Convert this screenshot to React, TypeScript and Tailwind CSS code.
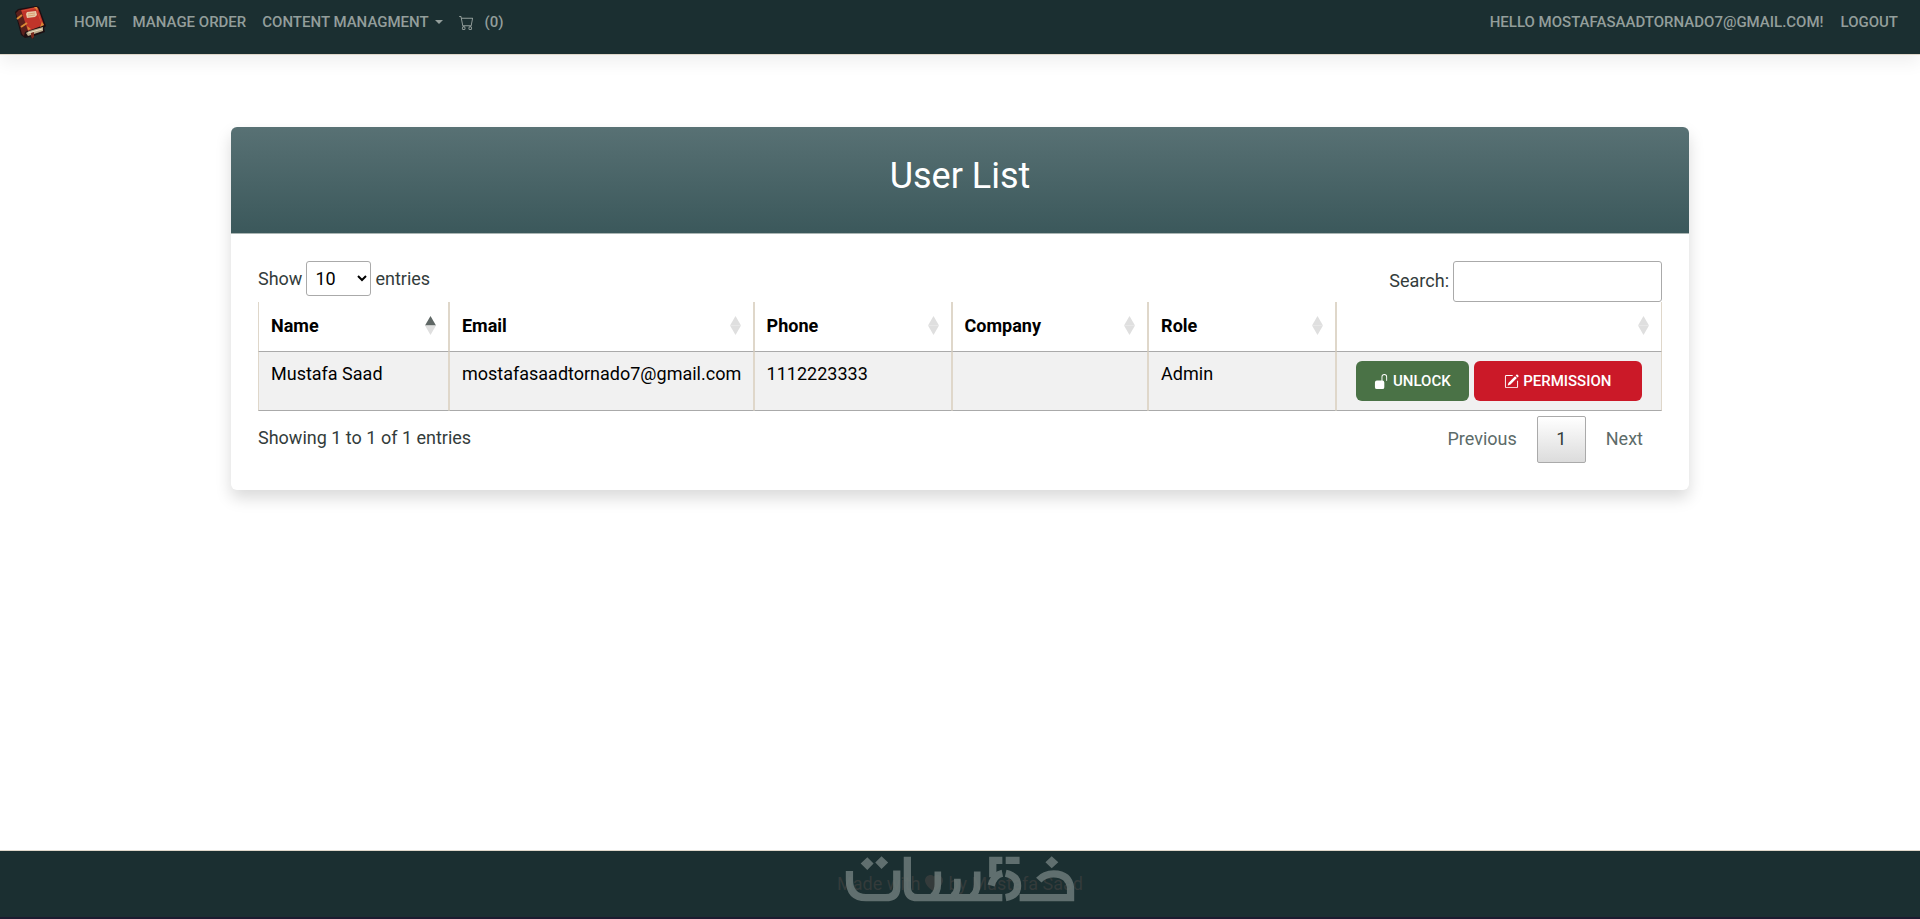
import React from "react";
import { BsCart, BsHeartFill, BsPencilSquare, BsUnlockFill } from "react-icons/bs";

type Sort = "asc" | "none";

const columns: { label: string; width: string; sort: Sort }[] = [
  { label: "Name", width: "w-[13.6%]", sort: "asc" },
  { label: "Email", width: "w-[21.7%]", sort: "none" },
  { label: "Phone", width: "w-[14.1%]", sort: "none" },
  { label: "Company", width: "w-[14%]", sort: "none" },
  { label: "Role", width: "w-[13.4%]", sort: "none" },
  { label: "", width: "w-[23.2%]", sort: "none" },
];

const users = [
  { name: "Mustafa Saad", email: "mostafasaadtornado7@gmail.com", phone: "1112223333", company: "", role: "Admin" },
];

const cellBorder = "border-x border-x-[#dfd7ca] border-b border-b-[#aaa]";

function BookLogo() {
  return (
    <svg viewBox="0 0 40 42" className="h-[42px] w-10" aria-hidden="true">
      <path d="M5 10 L8 7 L26 4 L29 5 L36 24 L34 26 L35 30 L24 34 L23 37 L20 35 L15 36 L11 33 Z" fill="#1c0f12" />
      <path d="M6 11 L9 8 L12 8 L19 28 L15 30 L14 34 L12 32 Z" fill="#5b201c" />
      <path d="M11 8 L26 5 L28 6 L34 23 L18 29 Z" fill="#c0342a" />
      <path d="M12 9 L26 6 L32 22" stroke="#d54c36" strokeWidth="1" fill="none" />
      <path d="M16 12 L17 10 L26 9 L27 13 L25 15 L17 16 Z" fill="#e6c9a8" />
      <path d="M18 12 L25 11 M18 14 L25 13" stroke="#d9a070" strokeWidth="1" />
      <path d="M7 17 L12 13 M11 25 L17 21" stroke="#d98a35" strokeWidth="2" />
      <path d="M24 5 L27 5 L28 9 Z M34 23 L30 25 L32 20 Z M18 28 L17 24 L21 27 Z" fill="#d98a35" />
      <path d="M16 31 L19 29 L33 25 L33 29 L18 34 Z" fill="#b9a98a" />
      <path d="M18 31 L32 27" stroke="#ece0c4" strokeWidth="1" />
      <path d="M21 31 L24 30 L24 35 L22 37 L21 34 Z" fill="#7a2a1e" />
    </svg>
  );
}

function WatermarkLogo() {
  return (
    <svg viewBox="130 40 700 145" className="h-12 w-[232px]" fill="none" stroke="#6d7b7a" strokeWidth="22" aria-hidden="true">
      <path d="M200 47 L219 66 L200 85 L180 66 Z M243 44 L263 63 L243 82 L224 63 Z M757 44 L777 62 L757 80 L738 62 Z" fill="#6d7b7a" stroke="none" />
      <path d="M146 88 V115 Q146 169 196 169 H255 Q289 169 289 138 V87" />
      <path d="M321 45 V138 Q321 169 352 169 H608" />
      <path d="M413 90 V128 Q413 152 397 164 M532 90 V128 Q532 152 516 164" strokeWidth="20" />
      <path d="M472 112 V136 Q472 154 458 164" strokeWidth="20" />
      <path d="M608 56 H579 V107 M618 56 H660" />
      <path d="M574 132 Q583 100 608 95" />
      <path d="M618 95 Q654 103 654 133 Q654 163 618 169" />
      <path d="M660 169 H814 V140 Q810 98 763 97 Q735 97 718 116" />
    </svg>
  );
}

function SortMark({ sort }: { sort: Sort }) {
  return (
    <svg viewBox="0 0 11 19" className="h-[19px] w-[11px] shrink-0" aria-hidden="true">
      <path d="M0 9.5 L5.5 0 L11 9.5 Z" fill={sort === "asc" ? "#5f6765" : "#dfdfdf"} />
      <path d="M0 9.5 L5.5 19 L11 9.5 Z" fill="#dfdfdf" />
    </svg>
  );
}

function NavBar() {
  return (
    <header className="border-b border-[#dfd7ca] bg-[#1b2f31] shadow-[0_8px_16px_rgba(0,0,0,0.06)]">
      <nav className="flex h-[54px] items-start justify-between px-[10px] text-[15px] leading-[22px] font-medium text-[#939e9b]">
        <div className="flex items-start">
          <a href="#home" aria-label="Book store" className="mr-6 pt-[2px]">
            <BookLogo />
          </a>
          <div className="flex gap-4 pt-[11px]">
            <a href="#home">HOME</a>
            <a href="#orders">MANAGE ORDER</a>
            <button type="button" className="flex items-center gap-[6px]">
              CONTENT MANAGMENT
              <svg viewBox="0 0 8 4" className="h-1 w-2" aria-hidden="true">
                <path d="M0 0 H8 L4 4 Z" fill="currentColor" />
              </svg>
            </button>
            <a href="#cart" className="flex items-center gap-[11px]">
              <BsCart className="size-[15px]" />
              (0)
            </a>
          </div>
        </div>
        <div className="flex gap-[17px] pt-[11px] pr-3">
          <a href="#account">HELLO MOSTAFASAADTORNADO7@GMAIL.COM!</a>
          <a href="#logout">LOGOUT</a>
        </div>
      </nav>
    </header>
  );
}

function UserTable() {
  return (
    <table className="w-full table-fixed border-separate border-spacing-0 text-black">
      <thead>
        <tr>
          {columns.map((column, i) => (
            <th key={i} className={`${column.width} ${cellBorder} px-3 pt-[10px] pb-3 text-left font-bold`}>
              <div className="flex h-[27px] items-center justify-between">
                <span>{column.label}</span>
                <SortMark sort={column.sort} />
              </div>
            </th>
          ))}
        </tr>
      </thead>
      <tbody>
        {users.map((user) => (
          <tr key={user.email} className="bg-[#f1f1f1] align-top">
            {[user.name, user.email, user.phone, user.company, user.role].map((value, i) => (
              <td key={i} className={`${cellBorder} px-3 py-2 whitespace-nowrap`}>
                {value}
              </td>
            ))}
            <td className={`${cellBorder} px-[19px] py-[9px]`}>
              <div className="flex gap-[5px] text-[15px] font-medium text-white">
                <button type="button" className="flex h-10 flex-[2] items-center justify-center gap-1 rounded-md bg-[#4a7246]">
                  <BsUnlockFill className="size-[15px]" />
                  UNLOCK
                </button>
                <button type="button" className="flex h-10 flex-[3] items-center justify-center gap-1 rounded-md bg-[#cb1928]">
                  <BsPencilSquare className="size-[15px]" />
                  PERMISSION
                </button>
              </div>
            </td>
          </tr>
        ))}
      </tbody>
    </table>
  );
}

export default function App() {
  return (
    <div className="flex min-h-screen flex-col bg-white font-[Roboto,sans-serif] text-lg leading-[27px] text-[#333c3b]">
      <NavBar />
      <main className="flex-1 px-6 pt-[72px] pb-12">
        <section className="mx-auto w-full max-w-[1458px] overflow-hidden rounded-md bg-white shadow-[0_8px_16px_rgba(0,0,0,0.15)]">
          <div className="flex h-[107px] items-center justify-center border-b border-[#aab5b3] bg-linear-to-b from-[#587174] to-[#3b585b] pb-2">
            <h1 className="text-4xl text-white">User List</h1>
          </div>
          <div className="p-[27px]">
            <div className="flex items-start justify-between">
              <label className="flex items-center gap-1">
                Show
                <select defaultValue="10" className="h-[35px] w-[65px] rounded-[3px] border border-[#aaa] bg-transparent px-1 text-black">
                  <option>10</option>
                  <option>25</option>
                  <option>50</option>
                  <option>100</option>
                </select>
                entries
              </label>
              <label className="flex items-start gap-1">
                <span className="pt-[6px]">Search:</span>
                <input type="search" className="h-[41px] w-[209px] rounded-[3px] border border-[#aaa] bg-transparent px-2 text-black" />
              </label>
            </div>
            <UserTable />
            <div className="flex items-start justify-between pt-[5px]">
              <p className="pt-2">Showing 1 to 1 of 1 entries</p>
              <div className="flex h-[47px] text-[#5c6b69]">
                <button type="button" className="px-5 pb-[2px]">Previous</button>
                <button type="button" className="w-[49px] rounded-[2px] border border-[#aaa] bg-linear-to-b from-white to-[#dcdcdc] pb-[2px] text-[#333c3b]">
                  1
                </button>
                <button type="button" className="pr-[19px] pb-[2px] pl-5">Next</button>
              </div>
            </div>
          </div>
        </section>
      </main>
      <footer className="relative border-t border-b-2 border-t-[#dfd7ca] border-b-[#1c1c30] bg-[#1b2f31] pt-[19px] pb-5 text-center text-[#343b3b]">
        <p className="flex items-center justify-center gap-[5px]">
          Made with <BsHeartFill className="size-[18px]" /> by Mustafa Saad
        </p>
        <div className="absolute inset-x-0 top-1 flex justify-center opacity-85">
          <WatermarkLogo />
        </div>
      </footer>
    </div>
  );
}
